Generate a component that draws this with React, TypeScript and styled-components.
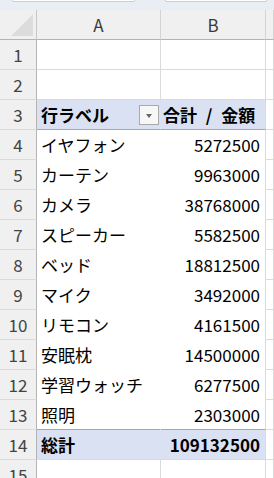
import React from 'react';
import styled, { createGlobalStyle, css } from 'styled-components';

const GlobalStyle = createGlobalStyle`
    html, body {
        margin: 0;
        padding: 0;
        background: #ffffff;
        overflow: hidden;
    }
    body {
        font-family: "Noto Sans CJK JP", "Noto Sans", sans-serif;
    }
`;

type Tone = 'plain' | 'head' | 'body' | 'total';

interface Row {
    label: string;
    amount: number;
}

const rows: Row[] = [
    { label: 'イヤフォン', amount: 5272500 },
    { label: 'カーテン', amount: 9963000 },
    { label: 'カメラ', amount: 38768000 },
    { label: 'スピーカー', amount: 5582500 },
    { label: 'ベッド', amount: 18812500 },
    { label: 'マイク', amount: 3492000 },
    { label: 'リモコン', amount: 4161500 },
    { label: '安眠枕', amount: 14500000 },
    { label: '学習ウォッチ', amount: 6277500 },
    { label: '照明', amount: 2303000 },
];

const GRID = '#dadada';
const PIVOT_BG = '#d9e1f2';
const PIVOT_LINE = '#8ea9db';

const Page = styled.div`
    width: 274px;
    height: 478px;
    overflow: hidden;
    display: flex;
    flex-direction: column;
`;

const TabStrip = styled.div`
    height: 10px;
    flex: none;
    background: #e8eef3;
    display: flex;
    align-items: flex-start;
    gap: 30px;
    padding-left: 12px;
`;

const Tab = styled.div<{ $width: number }>`
    width: ${(p) => p.$width}px;
    height: 2px;
    box-sizing: border-box;
    background: #ffffff;
    border: 1px solid #c9ced3;
    border-top: none;
    border-radius: 0 0 4px 4px;
`;

const Sheet = styled.div`
    display: grid;
    grid-template-columns: 37px 124px 105px 1fr;
    grid-auto-rows: 30px;
`;

const HeaderCell = styled.div<{ $first?: boolean }>`
    box-sizing: border-box;
    background: #f0f0f0;
    border-bottom: 1px solid #b4b4b4;
    border-right: 1px solid ${(p) => (p.$first ? '#c8c8c8' : '#d4d4d4')};
    display: flex;
    align-items: center;
    justify-content: center;
    font-size: 17px;
    color: #3a3a3a;
`;

const Corner = styled(HeaderCell)`
    align-items: flex-end;
    justify-content: flex-end;
    padding: 0 3px 3px 0;
`;

const CornerMark = styled.div`
    width: 22px;
    height: 22px;
    background: #dcdcdc;
    clip-path: polygon(100% 0, 100% 100%, 0 100%);
`;

const RowHead = styled.div`
    box-sizing: border-box;
    background: #f0f0f0;
    border-right: 1px solid #b4b4b4;
    border-bottom: 1px solid ${GRID};
    display: flex;
    align-items: center;
    justify-content: center;
    font-size: 17px;
    color: #444444;
`;

const toneStyles = {
    plain: css`
        background: #ffffff;
        border-bottom-color: ${GRID};
    `,
    head: css`
        background: ${PIVOT_BG};
        border-bottom-color: ${PIVOT_LINE};
        font-weight: 700;
    `,
    body: css`
        background: #ffffff;
        border-bottom-color: #ffffff;
    `,
    total: css`
        background: ${PIVOT_BG};
        font-weight: 700;
        border-bottom-color: ${GRID};
    `,
};

const Cell = styled.div<{ $tone: Tone; $right?: boolean; $open?: boolean; $edge?: string }>`
    box-sizing: border-box;
    border-right: 1px solid ${GRID};
    border-bottom: 1px solid ${GRID};
    display: flex;
    align-items: center;
    justify-content: ${(p) => (p.$right ? 'flex-end' : 'flex-start')};
    padding: ${(p) => (p.$right ? '0 5px 0 0' : '0 0 0 4px')};
    font-size: 17px;
    color: #000000;
    white-space: pre;
    ${(p) => toneStyles[p.$tone]}
    ${(p) => p.$open && css`border-right-color: transparent;`}
    ${(p) => p.$edge && css`border-bottom-color: ${p.$edge};`}
`;

const ValueHead = styled(Cell)`
    padding-left: 2px;
    word-spacing: 5px;
`;

const FilterButton = styled.div`
    width: 20px;
    height: 20px;
    box-sizing: border-box;
    margin-left: auto;
    margin-right: 1px;
    background: #f7f7f7;
    border: 1px solid #a9a9a9;
    display: flex;
    align-items: center;
    justify-content: center;
`;

const Caret = styled.div`
    width: 0;
    height: 0;
    margin-top: 2px;
    border-left: 3.5px solid transparent;
    border-right: 3.5px solid transparent;
    border-top: 4px solid #666666;
`;

const Blank = styled(Cell).attrs({ $tone: 'plain' as Tone })``;

const fmt = (n: number) => String(n);

export default function App() {
    const total = rows.reduce((s, r) => s + r.amount, 0);

    return (
        <Page>
            <GlobalStyle />
            <TabStrip>
                <Tab $width={123} />
                <Tab $width={102} />
            </TabStrip>
            <Sheet>
                <Corner $first>
                    <CornerMark />
                </Corner>
                <HeaderCell>A</HeaderCell>
                <HeaderCell>B</HeaderCell>
                <HeaderCell />

                {[1, 2].map((n) => (
                    <React.Fragment key={n}>
                        <RowHead>{n}</RowHead>
                        <Blank />
                        <Blank />
                        <Blank />
                    </React.Fragment>
                ))}

                <RowHead>3</RowHead>
                <Cell $tone="head" $open>
                    行ラベル
                    <FilterButton>
                        <Caret />
                    </FilterButton>
                </Cell>
                <ValueHead $tone="head">合計 / 金額</ValueHead>
                <Blank />

                {rows.map((r, i) => {
                    const last = i === rows.length - 1;
                    const edge = last ? PIVOT_LINE : undefined;
                    return (
                        <React.Fragment key={r.label}>
                            <RowHead>{i + 4}</RowHead>
                            <Cell $tone="body" $open $edge={edge}>
                                {r.label}
                            </Cell>
                            <Cell $tone="body" $right $edge={edge}>
                                {fmt(r.amount)}
                            </Cell>
                            <Blank />
                        </React.Fragment>
                    );
                })}

                <RowHead>14</RowHead>
                <Cell $tone="total" $open>
                    総計
                </Cell>
                <Cell $tone="total" $right>
                    {fmt(total)}
                </Cell>
                <Blank />

                <RowHead>15</RowHead>
                <Blank />
                <Blank />
                <Blank />
            </Sheet>
        </Page>
    );
}
